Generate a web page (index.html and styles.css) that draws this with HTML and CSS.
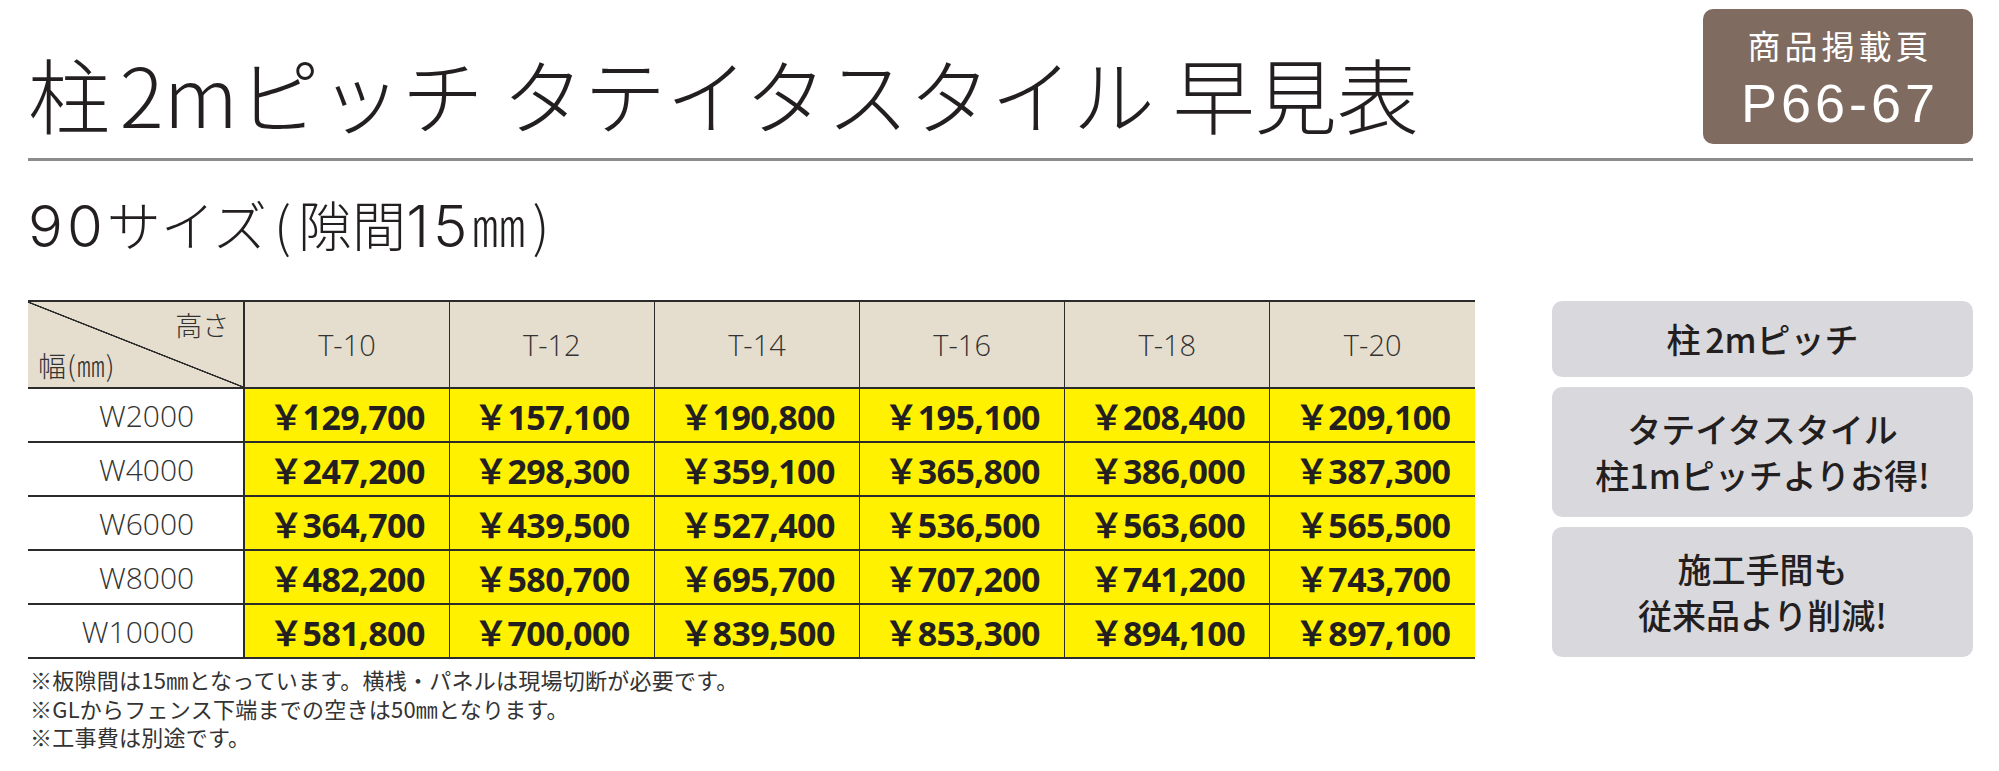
FILE: index.html
```html
<!DOCTYPE html>
<html lang="ja">
<head>
<meta charset="utf-8">
<title>柱2mピッチ タテイタスタイル 早見表</title>
<link rel="stylesheet" href="styles.css">
</head>
<body>
<div class="page">
  <header class="top">
    <h1 class="title"><span class="kgap">柱</span>2mピッチ タテイタスタイル 早見表</h1>
    <div class="badge">
      <span class="badge-label">商品掲載頁</span>
      <span class="badge-page">P66-67</span>
    </div>
  </header>
  <div class="rule"></div>
  <h2 class="subtitle"><span class="num">90</span>サイズ<span class="paren">(</span>隙間<span class="num">15</span>㎜<span class="paren">)</span></h2>
  <div class="main">
    <div class="table-area">
      <table class="price-table">
        <colgroup>
          <col class="c-label">
          <col class="c-val"><col class="c-val"><col class="c-val">
          <col class="c-val"><col class="c-val"><col class="c-val">
        </colgroup>
        <thead>
          <tr>
            <th class="corner">
              <div class="corner-inner">
                <span class="corner-h">高さ</span>
                <span class="corner-w">幅(㎜)</span>
              </div>
            </th>
            <th class="col">T-10</th>
            <th class="col">T-12</th>
            <th class="col">T-14</th>
            <th class="col">T-16</th>
            <th class="col">T-18</th>
            <th class="col">T-20</th>
          </tr>
        </thead>
        <tbody>
          <tr>
            <th class="row">W2000</th>
            <td class="price">￥129,700</td><td class="price">￥157,100</td><td class="price">￥190,800</td>
            <td class="price">￥195,100</td><td class="price">￥208,400</td><td class="price">￥209,100</td>
          </tr>
          <tr>
            <th class="row">W4000</th>
            <td class="price">￥247,200</td><td class="price">￥298,300</td><td class="price">￥359,100</td>
            <td class="price">￥365,800</td><td class="price">￥386,000</td><td class="price">￥387,300</td>
          </tr>
          <tr>
            <th class="row">W6000</th>
            <td class="price">￥364,700</td><td class="price">￥439,500</td><td class="price">￥527,400</td>
            <td class="price">￥536,500</td><td class="price">￥563,600</td><td class="price">￥565,500</td>
          </tr>
          <tr>
            <th class="row">W8000</th>
            <td class="price">￥482,200</td><td class="price">￥580,700</td><td class="price">￥695,700</td>
            <td class="price">￥707,200</td><td class="price">￥741,200</td><td class="price">￥743,700</td>
          </tr>
          <tr>
            <th class="row">W10000</th>
            <td class="price">￥581,800</td><td class="price">￥700,000</td><td class="price">￥839,500</td>
            <td class="price">￥853,300</td><td class="price">￥894,100</td><td class="price">￥897,100</td>
          </tr>
        </tbody>
      </table>
      <ul class="notes">
        <li>※板隙間は15㎜となっています。横桟・パネルは現場切断が必要です。</li>
        <li>※GLからフェンス下端までの空きは50㎜となります。</li>
        <li>※工事費は別途です。</li>
      </ul>
    </div>
    <aside class="points">
      <div class="point point-short"><span class="kgap">柱</span>2mピッチ</div>
      <div class="point">タテイタスタイル<br>柱1mピッチよりお得!</div>
      <div class="point">施工手間も<br>従来品より削減!</div>
    </aside>
  </div>
</div>
</body>
</html>
```

FILE: styles.css
```css
* { box-sizing: border-box; }

html, body {
  margin: 0;
  padding: 0;
  background: #ffffff;
}

body {
  font-family: "Noto Sans CJK JP", "Noto Sans", sans-serif;
  color: #231f20;
}

.page {
  width: 1999px;
  padding: 9px 26px 0 28px;
}

.kgap {
  margin-right: 0.14em;
}

/* ---------- header ---------- */
.top {
  display: flex;
  justify-content: space-between;
  align-items: flex-start;
}

.title {
  margin: 43px 0 0 0;
  font-size: 82px;
  font-weight: 300;
  line-height: 1;
  color: #231f20;
  white-space: nowrap;
}

.title .kgap {
  margin-right: 0.12em;
}

.badge {
  width: 270px;
  height: 135px;
  background: #7f6b5f;
  border-radius: 10px;
  display: flex;
  flex-direction: column;
  align-items: center;
  padding-top: 20px;
  color: #ffffff;
}

.badge-label {
  font-size: 33px;
  line-height: 33px;
  font-weight: 400;
  letter-spacing: 4px;
  margin-right: -4px;
}

.badge-page {
  font-family: "Liberation Sans", Arial, sans-serif;
  font-size: 54px;
  line-height: 54px;
  font-weight: 400;
  letter-spacing: 4px;
  margin-right: -4px;
  margin-top: 14px;
}

.rule {
  height: 3px;
  background: #8c8c8c;
  margin-top: 14px;
}

.subtitle {
  margin: 36px 0 0 0;
  height: 54px;
  font-size: 54px;
  font-weight: 300;
  line-height: 54px;
  color: #231f20;
  white-space: nowrap;
}

.subtitle .num {
  font-family: "Inter", "Noto Sans CJK JP", sans-serif;
  font-size: 58px;
  font-weight: 300;
  line-height: 0;
  letter-spacing: 4px;
}

.subtitle .paren {
  margin: 0 7px;
}

/* ---------- main ---------- */
.main {
  display: flex;
  justify-content: space-between;
  align-items: flex-start;
  margin-top: 49px;
}

.table-area {
  width: 1447px;
}

.price-table {
  width: 1447px;
  border-collapse: collapse;
  table-layout: fixed;
}

.c-label { width: 216px; }
.c-val { width: 205px; }

.price-table thead tr {
  height: 85px;
  border-top: 2px solid #2b2b2b;
  border-bottom: 2px solid #2b2b2b;
}

.corner {
  padding: 0;
  background-color: #e5dece;
  background-image: linear-gradient(to top right,
    transparent calc(50% - 1px),
    #2b2b2b calc(50% - 0.5px),
    #2b2b2b calc(50% + 0.5px),
    transparent calc(50% + 1px));
  border-right: 2px solid #2b2b2b;
}

.corner-inner {
  height: 85px;
  display: flex;
  flex-direction: column;
  justify-content: space-between;
  padding: 7px 14px 4px 10px;
  font-family: "Noto Sans CJK JP", "Noto Sans", sans-serif;
  font-weight: 300;
  line-height: 1.2;
  color: #333333;
}

.corner-h {
  align-self: flex-end;
  font-size: 27px;
}

.corner-w {
  align-self: flex-start;
  font-size: 28px;
  letter-spacing: 1px;
}

.col {
  background: #e5dece;
  font-family: "Open Sans", "Noto Sans", sans-serif;
  font-size: 29px;
  font-weight: 300;
  color: #333333;
  text-align: center;
  border-left: 1px solid #2b2b2b;
}

.price-table tbody tr {
  height: 54px;
  border-bottom: 2px solid #2b2b2b;
}

.row {
  background: #ffffff;
  font-family: "Open Sans", "Noto Sans", sans-serif;
  font-size: 30px;
  font-weight: 300;
  color: #333333;
  text-align: right;
  padding: 0 49px 0 0;
  border-right: 2px solid #2b2b2b;
}

.price {
  background: #fff100;
  font-family: "Open Sans", "Noto Sans CJK JP", sans-serif;
  font-size: 34px;
  font-weight: 700;
  letter-spacing: -0.6px;
  color: #231f20;
  text-align: center;
  padding: 0;
  border-left: 1px solid #2b2b2b;
  white-space: nowrap;
}

.notes {
  list-style: none;
  margin: 6px 0 0 0;
  padding: 0 0 0 2px;
  font-size: 22px;
  line-height: 28.5px;
  font-weight: 400;
  letter-spacing: 0.25px;
  color: #333333;
}

/* ---------- side points ---------- */
.points {
  width: 421px;
  display: flex;
  flex-direction: column;
  gap: 10px;
  margin-top: 1px;
}

.point {
  height: 130px;
  background: #d9d8dc;
  border-radius: 10px;
  display: flex;
  align-items: center;
  justify-content: center;
  text-align: center;
  font-size: 34px;
  font-weight: 500;
  line-height: 46px;
  color: #231f20;
}

.point-short {
  height: 76px;
}
```
